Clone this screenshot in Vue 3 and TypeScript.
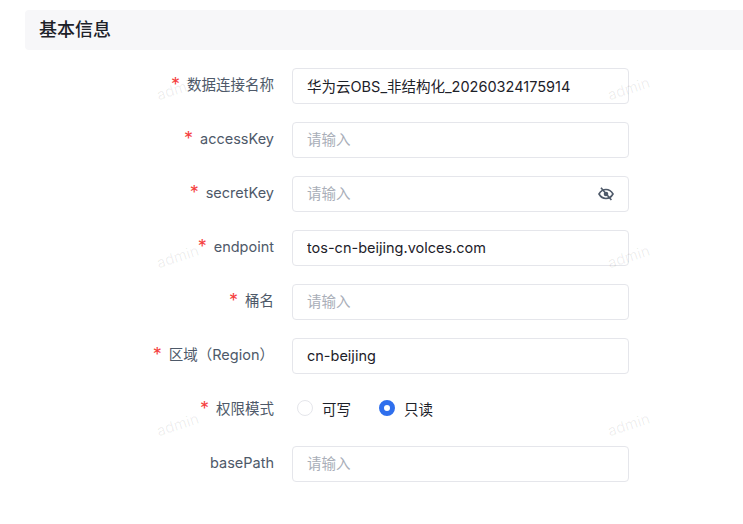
<template>
  <div class="page">
    <div class="section-title">基本信息</div>

    <form class="form" @submit.prevent>
      <div v-for="field in fields" :key="field.label" class="form-row">
        <label class="form-label" :class="{ required: field.required }">{{ field.label }}</label>
        <div v-if="field.type === 'radio'" class="radio-group">
          <label v-for="opt in modes" :key="opt" class="radio" :class="{ checked: mode === opt }" @click="mode = opt">
            <span class="radio-dot" />
            <span>{{ opt }}</span>
          </label>
        </div>
        <div v-else class="input-box">
          <input v-model="field.value" :placeholder="field.value ? '' : '请输入'" />
          <svg v-if="field.secret" class="eye" viewBox="0 0 16 16" fill="none" stroke="#4e5969" stroke-width="1.6">
            <path d="M1 8C2.7 5 5.1 3.5 8 3.5S13.3 5 15 8C13.3 11 10.900 12.500 8 12.500S2.700 11 1 8Z" />
            <circle cx="8" cy="8" r="2.300" fill="#4e5969" stroke="none" />
            <path d="M3 1.800L13.400 14" />
          </svg>
        </div>
      </div>
    </form>

    <span v-for="(mark, i) in marks" :key="i" class="watermark" :style="{ left: mark.x + 'px', top: mark.y + 'px' }">admin</span>
  </div>
</template>

<script setup lang="ts">
import { reactive, ref } from 'vue'

interface Field {
  label: string
  value: string
  required: boolean
  type?: 'radio'
  secret?: boolean
}

const fields = reactive<Field[]>([
  { label: '数据连接名称', value: '华为云OBS_非结构化_20260324175914', required: true },
  { label: 'accessKey', value: '', required: true },
  { label: 'secretKey', value: '', required: true, secret: true },
  { label: 'endpoint', value: 'tos-cn-beijing.volces.com', required: true },
  { label: '桶名', value: '', required: true },
  { label: '区域（Region）', value: 'cn-beijing', required: true },
  { label: '权限模式', value: '', required: true, type: 'radio' },
  { label: 'basePath', value: '', required: false },
])

const modes = ['可写', '只读']
const mode = ref('只读')

const marks = [
  { x: 156, y: 79 },
  { x: 607, y: 79 },
  { x: 156, y: 247 },
  { x: 607, y: 247 },
  { x: 156, y: 415 },
  { x: 607, y: 415 },
]
</script>

<style>
html,
body {
  margin: 0;
  background: #fff;
  overflow: hidden;
}
</style>

<style scoped>
.page {
  position: relative;
  height: 524px;
  overflow: hidden;
  padding: 10px 0 0 25px;
  box-sizing: border-box;
  font-family: Inter, "Noto Sans CJK SC", sans-serif;
  font-size: 14.5px;
  color: #1d2129;
}

.section-title {
  height: 40px;
  line-height: 40px;
  margin-right: -8px;
  padding-left: 14px;
  background: #f7f7f9;
  border-radius: 4px;
  font-size: 18px;
  font-weight: 500;
}

.form {
  display: flex;
  flex-direction: column;
  gap: 18px;
  margin-top: 18px;
}

.form-row {
  display: flex;
  align-items: flex-start;
  height: 36px;
}

.form-label {
  width: 249px;
  height: 34px;
  line-height: 34px;
  text-align: right;
  color: #4e5969;
  flex: none;
}

.form-label.required::before {
  content: "*";
  color: #f53f3f;
  font-size: 18px;
  line-height: 1;
  vertical-align: -1px;
  margin-right: 7px;
}

.input-box {
  margin-left: 18px;
  width: 337px;
  height: 36px;
  box-sizing: border-box;
  display: flex;
  align-items: center;
  padding: 0 14px;
  border: 1px solid #e5e6eb;
  border-radius: 4px;
  background: #fff;
}

.input-box input {
  flex: 1;
  min-width: 0;
  height: 32px;
  margin-top: -2px;
  border: none;
  outline: none;
  padding: 0;
  background: transparent;
  font: inherit;
  color: #1d2129;
}

.input-box input::placeholder {
  color: #a9aeb8;
}

.eye {
  width: 16px;
  height: 16px;
  flex: none;
}

.radio-group {
  display: flex;
  gap: 28px;
  margin-left: 23px;
  height: 32px;
  align-items: center;
}

.radio {
  display: flex;
  align-items: center;
  gap: 9px;
  color: #1d2129;
  cursor: pointer;
}

.radio-dot {
  width: 16px;
  height: 16px;
  box-sizing: border-box;
  border: 1px solid #e5e6eb;
  border-radius: 50%;
  background: #fff;
}

.radio.checked .radio-dot {
  border: 5px solid #2f6fed;
}

.watermark {
  position: absolute;
  font-size: 15px;
  color: rgba(0, 0, 0, 0.07);
  transform: rotate(-18deg);
  pointer-events: none;
}
</style>
